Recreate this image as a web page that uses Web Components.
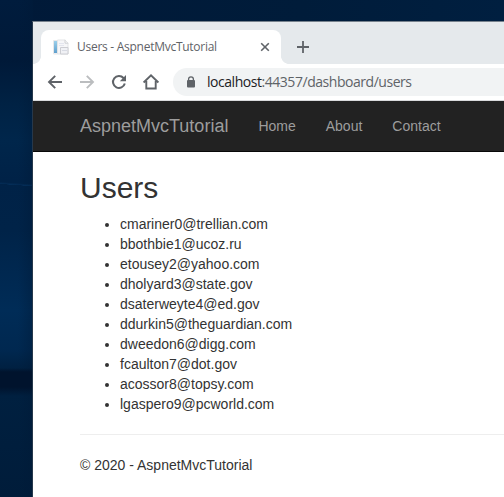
<!DOCTYPE html>
<html lang="en">
<head>
<meta charset="utf-8">
<title>Users - AspnetMvcTutorial</title>
<style>
html,body{margin:0;height:100%;overflow:hidden}
</style>
</head>
<body>
<desk-top>
  <browser-window>
    <tab-strip slot="tabs"><browser-tab>Users - AspnetMvcTutorial</browser-tab></tab-strip>
    <tool-bar slot="toolbar"><span slot="host">localhost</span>:44357/dashboard/users</tool-bar>
    <nav-bar><span slot="brand">AspnetMvcTutorial</span><nav-link>Home</nav-link><nav-link>About</nav-link><nav-link>Contact</nav-link></nav-bar>
    <users-page></users-page>
  </browser-window>
</desk-top>
<script>
const define = (name, html) => customElements.define(name, class extends HTMLElement {
  constructor() {
    super();
    const t = document.createElement('template');
    t.innerHTML = html;
    this.attachShadow({mode: 'open'}).append(t.content.cloneNode(true));
  }
});

define('desk-top', `<style>
:host{display:block;box-sizing:border-box;width:100vw;height:100vh;padding:21px 0 0 32px;overflow:hidden;
background:
 linear-gradient(4deg,#06336000 49%,#063360aa 50%,#06336000 60%) 0 176px/33px 18px no-repeat,
 linear-gradient(#00132d00,#00132d 4px,#00132d 19px,#00132d00) 0 368px/33px 28px no-repeat,
 linear-gradient(90deg,#00193600 0,#00193600 18px,#00193666 33px) 0 0/33px 100% no-repeat,
 linear-gradient(180deg,#001c3d 0,#001938 60px,#002244 105px,#00264b 140px,#002247 180px,#002348 230px,#002c57 310px,#002850 350px,#001f3f 371px,#002040 394px,#001c3a 497px) 0 0/33px 100% no-repeat,
 linear-gradient(90deg,#001938,#001c3a 60%,#001f40)}
</style><slot></slot>`);

define('browser-window', `<style>
:host{display:flex;flex-direction:column;height:100%;background:#fff;border-top:1px solid #77828d;border-left:1px solid #26384b;box-sizing:border-box}
</style><slot name="tabs"></slot><slot name="toolbar"></slot><slot></slot>`);

define('tab-strip', `<style>
:host{display:flex;align-items:flex-end;height:42px;background:#e5e9ec;padding-left:8px;flex:none}
svg{margin:0 0 10px 15px;flex:none}
</style><slot></slot><svg width="14" height="14" viewBox="0 0 14 14"><path d="M7 1v12M1 7h12" stroke="#5f6368" stroke-width="1.8" fill="none"/></svg>`);

define('browser-tab', `<style>
:host{display:flex;align-items:center;position:relative;box-sizing:border-box;width:240px;height:34px;padding:0 11px 0 12px;background:#fff;border-radius:8px 8px 0 0;color:#5f6368;font:12px/16px "Open Sans","Noto Sans",sans-serif}
:host::before,:host::after{content:"";position:absolute;bottom:0;width:8px;height:8px}
:host::before{left:-8px;background:radial-gradient(circle at 0 0,#fff0 7.6px,#fff 8.2px)}
:host::after{right:-8px;background:radial-gradient(circle at 100% 0,#fff0 7.6px,#fff 8.2px)}
span{flex:1;white-space:nowrap;margin-left:8px;letter-spacing:-.27px}
svg{flex:none}
</style>
<svg width="16" height="16" viewBox="0 0 16 16"><defs><linearGradient id="b" x2="0" y2="1"><stop stop-color="#9bcfea"/><stop offset="1" stop-color="#5f9fcd"/></linearGradient></defs>
<path d="M.5 1.500h4v13.500h-4z" fill="#f1f2f3" stroke="#e6e7e9"/><path d="M1 2h3v12H1z" fill="url(#b)"/><path d="M4.500 1h7.500l3 3v11H4.500z" fill="#f6f6f8" stroke="#e3e4e6"/><path d="M12 .8v3.400h3.200" fill="none" stroke="#d0d2d5"/><path d="M6 4h5v1H6zM6 6h5v1H6z" fill="#e3e5ee"/><path d="M7.500 8.500h7.500v6.500H7.500z" fill="#f0f1f5" stroke="#cccdd2"/><path d="M9 11.500h5" stroke="#d8dbe4"/></svg>
<span><slot></slot></span>
<svg width="10" height="10" viewBox="0 0 10 10"><path d="M1.200 1.200l7.600 7.600M8.800 1.200L1.200 8.800" stroke="#5f6368" stroke-width="1.6"/></svg>`);

define('tool-bar', `<style>
:host{display:flex;align-items:center;box-sizing:border-box;height:37px;border-bottom:1px solid #d9dadc;background:#fff;padding-left:12px;flex:none}
.i{width:20px;height:20px;margin-right:12px;flex:none}
.u{display:flex;align-items:center;height:28px;flex:1;border-radius:14px 0 0 14px;background:#f1f3f4;color:#5f6368;font:14px/20px "Open Sans","Noto Sans",sans-serif;padding-left:13px;white-space:nowrap}
.u svg{margin-right:11px;flex:none}
.t{letter-spacing:-.46px}
slot[name]{color:#202124}
</style>
<svg class="i" viewBox="0 0 20 20"><path d="M17 10H4.500M10.200 3.800L4 10l6.200 6.200" fill="none" stroke="#5f6368" stroke-width="1.9"/></svg>
<svg class="i" viewBox="0 0 20 20"><path d="M3 10h12.500M9.800 3.800L16 10l-6.200 6.200" fill="none" stroke="#bbbdbf" stroke-width="1.9"/></svg>
<svg class="i" viewBox="0 0 20 20"><path d="M15.800 11.500A6 6 0 1 1 14.500 6l1 1.200" fill="none" stroke="#5f6368" stroke-width="2"/><path d="M17 3v6.200h-6.200z" fill="#5f6368"/></svg>
<svg class="i" viewBox="0 0 20 20"><path d="M2.600 10.500L10 3.300l7.400 7.200M5.300 9v7.500h9.400V9" fill="none" stroke="#5f6368" stroke-width="1.900"/></svg>
<div class="u"><svg width="10" height="12" viewBox="0 0 10 12"><path d="M2.600 5V3.200a2.400 2.400 0 0 1 4.800 0V5" fill="none" stroke="#5f6368" stroke-width="1.300"/><rect x="1" y="4" width="8" height="7.500" rx="1" fill="#5f6368"/></svg><div class="t"><slot name="host"></slot><slot></slot></div></div>`);

define('nav-bar', `<style>
:host{display:flex;box-sizing:border-box;height:51px;background:#222;border-bottom:1px solid #080808;padding-left:32px;color:#9d9d9d;font:14px/20px "Liberation Sans",Arial,sans-serif;flex:none}
.b{padding:15px;font-size:18px}
</style><div class="b"><slot name="brand"></slot></div><slot></slot>`);

define('nav-link', `<style>:host{display:block;padding:15px}</style><slot></slot>`);

define('users-page', `<style>
:host{display:block;padding-left:47px;color:#333;font:14px/20px "Liberation Sans",Arial,sans-serif}
h2{font-size:30px;line-height:33px;font-weight:500;margin:19px 0 10px}
ul{margin:0 0 10px;padding-left:40px}
hr{border:0;border-top:1px solid #eee;margin:20px 0}
p{margin:0}
</style>
<h2>Users</h2>
<ul><li>cmariner0@trellian.com</li><li>bbothbie1@ucoz.ru</li><li>etousey2@yahoo.com</li><li>dholyard3@state.gov</li><li>dsaterweyte4@ed.gov</li><li>ddurkin5@theguardian.com</li><li>dweedon6@digg.com</li><li>fcaulton7@dot.gov</li><li>acossor8@topsy.com</li><li>lgaspero9@pcworld.com</li></ul>
<hr><p>© 2020 - AspnetMvcTutorial</p>`);
</script>
</body>
</html>
